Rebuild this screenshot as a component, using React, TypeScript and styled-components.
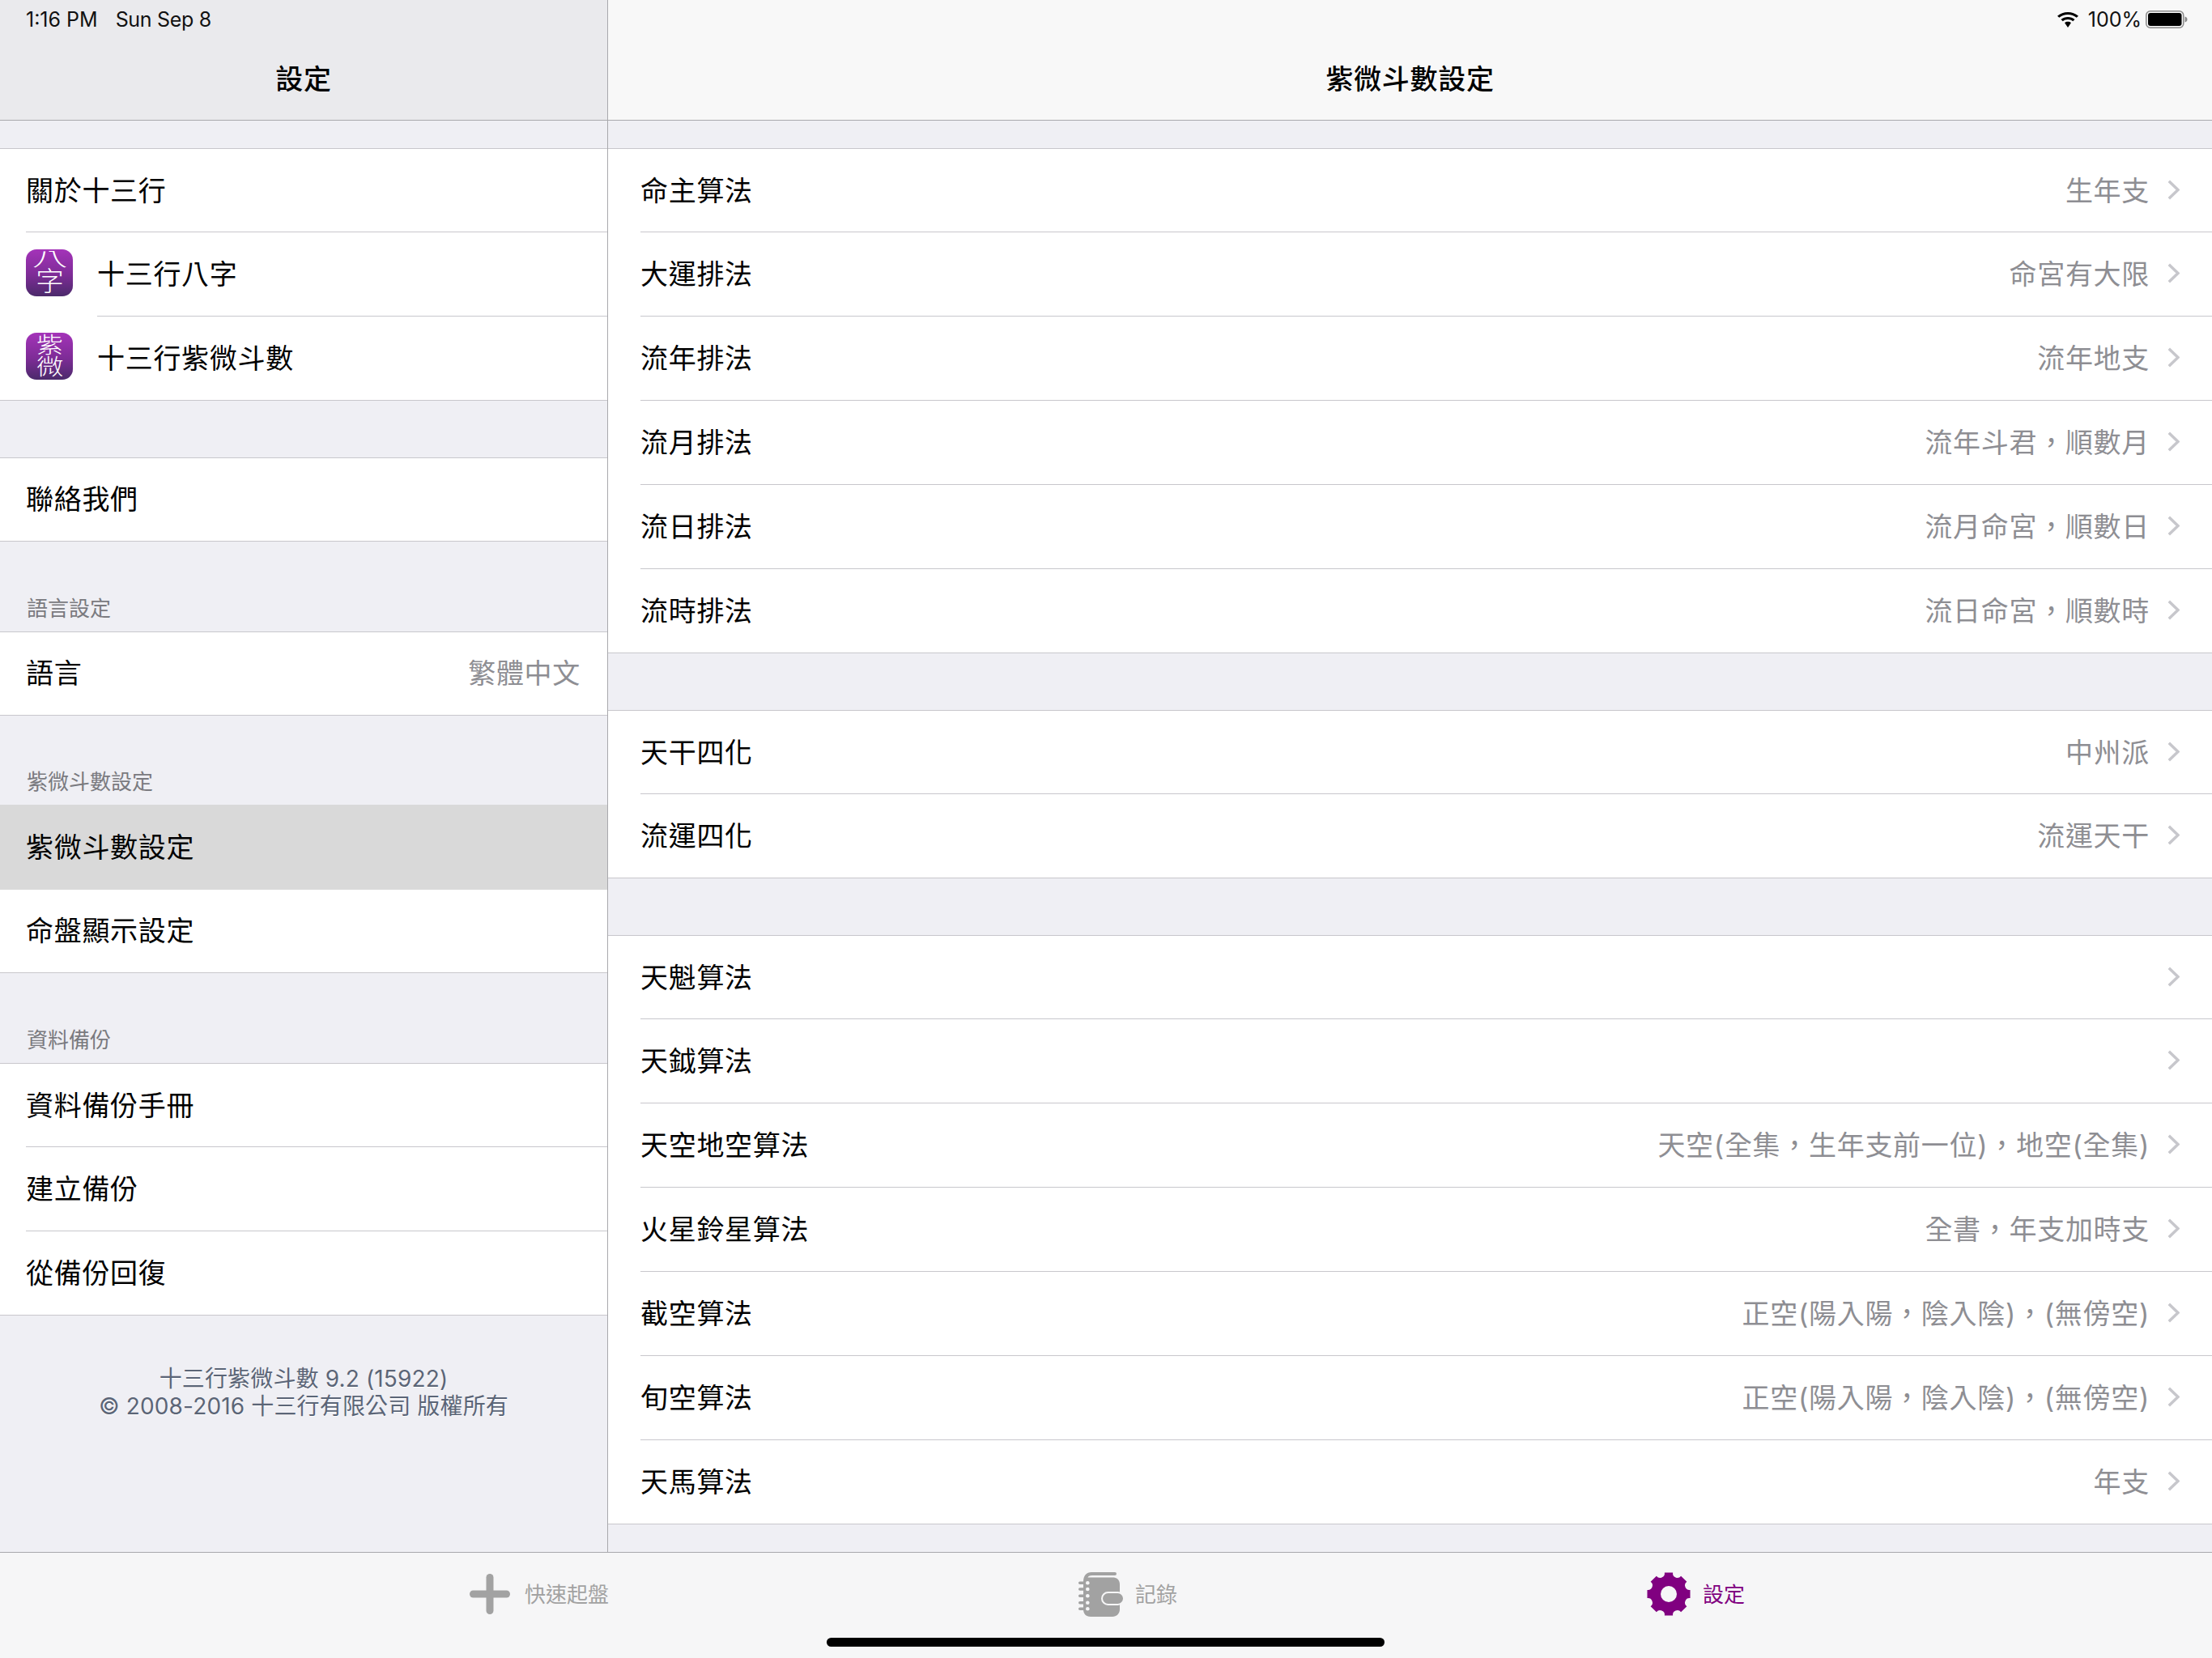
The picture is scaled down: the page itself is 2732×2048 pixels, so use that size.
import styled, { createGlobalStyle } from 'styled-components';

const GlobalStyle = createGlobalStyle`
  html, body {
    margin: 0;
    padding: 0;
    background: #efeff4;
  }
  * {
    box-sizing: border-box;
  }
`;

const FONT = `Inter, "Noto Sans CJK TC", "Noto Sans", sans-serif`;

const Page = styled.div`
  width: 2732px;
  height: 2048px;
  display: flex;
  flex-direction: column;
  background: #efeff4;
  font-family: ${FONT};
  overflow: hidden;
`;

const Panes = styled.div`
  flex: 1;
  display: flex;
  min-height: 0;
`;

const Sidebar = styled.div`
  width: 751px;
  flex: none;
  display: flex;
  flex-direction: column;
  border-right: 1px solid #a9a9ad;
`;

const Detail = styled.div`
  flex: 1;
  display: flex;
  flex-direction: column;
`;

const NavBar = styled.div<{ $tint: string }>`
  height: 149px;
  flex: none;
  background: ${(p) => p.$tint};
  border-bottom: 1px solid #a9a9ad;
  display: flex;
  flex-direction: column;
`;

const StatusRow = styled.div`
  height: 48px;
  padding: 0 30px 0 32px;
  display: flex;
  align-items: center;
  color: #111;
  font-size: 25px;
`;

const StatusTime = styled.span`
  margin-right: 22px;
`;

const StatusDate = styled.span`
  letter-spacing: -0.3px;
`;

const StatusRight = styled.div`
  margin-left: auto;
  display: flex;
  align-items: center;
  gap: 12px;
`;

const BatteryWrap = styled.div`
  margin-left: -7px;
  display: flex;
`;

const NavTitle = styled.div`
  height: 100px;
  padding-bottom: 5px;
  display: flex;
  align-items: center;
  justify-content: center;
  color: #000;
  font-size: 34px;
  font-weight: 500;
  letter-spacing: 0.7px;
`;

const Scroll = styled.div`
  flex: 1;
  display: flex;
  flex-direction: column;
  min-height: 0;
`;

const Gap = styled.div<{ $h: number }>`
  height: ${(p) => p.$h}px;
  flex: none;
  display: flex;
  align-items: flex-end;
  padding: 0 0 10px 33px;
  color: #7a7a7f;
  font-size: 26px;
  line-height: 36px;
`;

const Group = styled.div<{ $flushTop?: boolean }>`
  flex: none;
  background: #fff;
  border-top: 1px solid ${(p) => (p.$flushTop ? '#d9d9d9' : '#c8c7cc')};
  border-bottom: 1px solid #c8c7cc;
`;

const Row = styled.div<{ $h: number; $inset: number; $selected?: boolean; $noSep?: boolean; $sepFrom: number }>`
  height: ${(p) => p.$h}px;
  position: relative;
  display: flex;
  align-items: center;
  padding-left: ${(p) => p.$inset}px;
  padding-bottom: 5px;
  background: ${(p) => (p.$selected ? '#d9d9d9' : '#fff')};
  font-size: 34px;
  letter-spacing: 0.7px;
  color: #000;

  &::after {
    content: '';
    display: ${(p) => (p.$noSep ? 'none' : 'block')};
    position: absolute;
    left: ${(p) => p.$sepFrom}px;
    right: 0;
    bottom: 0;
    height: 1px;
    background: #c8c7cc;
  }
`;

const Label = styled.span`
  white-space: nowrap;
`;

const Value = styled.span<{ $end: number }>`
  margin-left: auto;
  margin-right: ${(p) => p.$end}px;
  color: #8e8e93;
  white-space: nowrap;
`;

const AppIcon = styled.div`
  width: 58px;
  height: 58px;
  flex: none;
  margin-right: 30px;
  border-radius: 13px;
  background: linear-gradient(180deg, #a433b9 0%, #7d2c96 55%, #4b2a6b 100%);
  color: #fff;
  font-weight: 300;
  letter-spacing: 0;
  display: flex;
  flex-direction: column;
  align-items: center;
  justify-content: center;
`;

const Glyph = styled.span<{ $size: number; $h: number; $stretch: number }>`
  display: block;
  height: ${(p) => p.$h}px;
  line-height: ${(p) => p.$h}px;
  font-size: ${(p) => p.$size}px;
  transform: scaleX(${(p) => p.$stretch});
`;

const Chevron = styled.svg`
  width: 15px;
  height: 25px;
  flex: none;
  margin: 2px 40px 0 22px;
`;

const Footer = styled.div`
  padding-top: 61px;
  text-align: center;
  color: #5b6577;
  font-size: 28px;
  letter-spacing: 0.15px;
  line-height: 34px;
  text-shadow: 0 1px 0 #fff;
`;

const TabBar = styled.div`
  height: 131px;
  flex: none;
  position: relative;
  background: #f6f6f7;
  border-top: 1px solid #a9a9ad;
  display: flex;
  padding: 23px 0 0 580px;
`;

const Tab = styled.div<{ $active?: boolean; $w: number; $gap: number }>`
  width: ${(p) => p.$w}px;
  flex: none;
  height: 56px;
  display: flex;
  align-items: center;
  gap: ${(p) => p.$gap}px;
  font-size: 26px;
  color: ${(p) => (p.$active ? '#800080' : '#a2a2a2')};
`;

const TabLabel = styled.span`
  padding-bottom: 4px;
`;

const HomeBar = styled.div`
  position: absolute;
  left: 1021px;
  top: 105px;
  width: 689px;
  height: 11px;
  border-radius: 6px;
  background: #000;
`;

type IconGlyph = { char: string; size: number; h: number; stretch: number };

type Item = {
  label: string;
  value?: string;
  icon?: IconGlyph[];
  selected?: boolean;
};

type Section = {
  gap: number;
  header?: string;
  items: Item[];
};

const sidebar: Section[] = [
  {
    gap: 34,
    items: [
      { label: '關於十三行' },
      {
        label: '十三行八字',
        icon: [
          { char: '八', size: 23, h: 22, stretch: 1.9 },
          { char: '字', size: 33, h: 33, stretch: 1.05 },
        ],
      },
      {
        label: '十三行紫微斗數',
        icon: [
          { char: '紫', size: 27, h: 27, stretch: 1.22 },
          { char: '微', size: 27, h: 27, stretch: 1.25 },
        ],
      },
    ],
  },
  { gap: 70, items: [{ label: '聯絡我們' }] },
  { gap: 111, header: '語言設定', items: [{ label: '語言', value: '繁體中文' }] },
  {
    gap: 110,
    header: '紫微斗數設定',
    items: [{ label: '紫微斗數設定', selected: true }, { label: '命盤顯示設定' }],
  },
  {
    gap: 111,
    header: '資料備份',
    items: [{ label: '資料備份手冊' }, { label: '建立備份' }, { label: '從備份回復' }],
  },
];

const detail: Section[] = [
  {
    gap: 34,
    items: [
      { label: '命主算法', value: '生年支' },
      { label: '大運排法', value: '命宮有大限' },
      { label: '流年排法', value: '流年地支' },
      { label: '流月排法', value: '流年斗君，順數月' },
      { label: '流日排法', value: '流月命宮，順數日' },
      { label: '流時排法', value: '流日命宮，順數時' },
    ],
  },
  {
    gap: 70,
    items: [
      { label: '天干四化', value: '中州派' },
      { label: '流運四化', value: '流運天干' },
    ],
  },
  {
    gap: 70,
    items: [
      { label: '天魁算法' },
      { label: '天鉞算法' },
      { label: '天空地空算法', value: '天空(全集，生年支前一位)，地空(全集)' },
      { label: '火星鈴星算法', value: '全書，年支加時支' },
      { label: '截空算法', value: '正空(陽入陽，陰入陰)，(無傍空)' },
      { label: '旬空算法', value: '正空(陽入陽，陰入陰)，(無傍空)' },
      { label: '天馬算法', value: '年支' },
    ],
  },
];

function WifiIcon() {
  return (
    <svg width="26" height="19" viewBox="1.700 0.200 22.600 18.600" preserveAspectRatio="none">
      <path d="M13 3.200c3.500 0 6.800 1.400 9.300 3.700l2-2.100C21.200 1.900 17.200.2 13 .2S4.800 1.900 1.700 4.800l2 2.100C6.200 4.600 9.500 3.200 13 3.200z" fill="#000" />
      <path d="M13 9c2 0 3.900.8 5.400 2.100l2-2.100C18.400 7.100 15.800 6 13 6S7.600 7.100 5.600 9l2 2.100C9.100 9.800 11 9 13 9z" fill="#000" />
      <path d="M13 11.800c-1.300 0-2.500.5-3.400 1.300L13 18.800l3.400-5.700c-.9-.8-2.100-1.300-3.400-1.300z" fill="#000" />
    </svg>
  );
}

function BatteryIcon() {
  return (
    <svg width="52" height="22" viewBox="0 0 52 22">
      <rect x="0.750" y="0.750" width="46" height="20.500" rx="5" fill="none" stroke="#8a8a8a" strokeWidth="1.500" />
      <rect x="3" y="3" width="41.500" height="16" rx="3" fill="#000" />
      <path d="M48.500 7.500c1.800.5 3 1.900 3 3.500s-1.200 3-3 3.500z" fill="#8a8a8a" />
    </svg>
  );
}

function PlusIcon() {
  return (
    <svg width="50" height="50" viewBox="0 0 50 50">
      <rect x="20.500" y="0" width="9" height="50" rx="4.500" fill="#a2a2a2" />
      <rect x="0" y="20.500" width="50" height="9" rx="4.500" fill="#a2a2a2" />
    </svg>
  );
}

function NotebookIcon() {
  return (
    <svg width="56" height="55" viewBox="0 0 56 55">
      <path d="M6 12C6 4 10 0 16 0H45a2 2 0 0 1 0 4H17C13.500 4 12 5 11.500 6.500H42C47 6.500 51 9 51 15V46C51 51 47 55 42 55H15C9 55 6 51 6 46Z" fill="#a2a2a2" />
      <rect x="29" y="25" width="27" height="15" rx="7.500" fill="#a2a2a2" stroke="#f6f6f7" strokeWidth="2" />
      {[13.300, 21, 29.300, 37.700, 45.300].map((y) => (
        <g key={y}>
          <rect x="0" y={y - 1.700} width="8" height="3.400" rx="1.700" fill="#a2a2a2" />
          <circle cx="11.300" cy={y} r="2.300" fill="#f6f6f7" />
        </g>
      ))}
    </svg>
  );
}

function gearPath(): string {
  const cx = 27;
  const cy = 27;
  const outer = 27;
  const half = 0.19;
  const step = (Math.PI * 2) / 8;
  const p = (t: number) =>
    `${(cx + outer * Math.cos(t)).toFixed(2)} ${(cy + outer * Math.sin(t)).toFixed(2)}`;
  let d = '';
  for (let i = 0; i < 8; i++) {
    const a = i * step - Math.PI / 2;
    d += `${i === 0 ? 'M' : 'L'}${p(a - half)} L${p(a + half)} A5.600 5.600 0 0 0 ${p(a + step - half)} `;
  }
  return d + 'Z';
}

function GearIcon() {
  return (
    <svg width="54" height="54" viewBox="0 0 54 54">
      <path d={gearPath()} fill="#800080" />
      <circle cx="27" cy="27" r="10" fill="#f6f6f7" />
    </svg>
  );
}

function rowHeight(items: Item[], i: number): number {
  if (items.length === 1) return 102;
  const base = i === 0 || i === items.length - 1 ? 103 : 104;
  // a selected row swallows the separator line below it
  if (items[i].selected) return base + 1;
  if (items[i - 1]?.selected) return base - 1;
  return base;
}

function ListSection({ section, inset, valueEnd, chevron }: { section: Section; inset: number; valueEnd: number; chevron: boolean }) {
  const { items } = section;
  return (
    <>
      <Gap $h={section.gap}>{section.header}</Gap>
      <Group $flushTop={items[0].selected}>
        {items.map((item, i) => {
          const last = i === items.length - 1;
          // the separator between icon rows starts at the label, not the icon
          const sepFrom = item.icon && items[i + 1]?.icon ? 120 : inset;
          return (
            <Row
              key={item.label}
              $h={rowHeight(items, i)}
              $inset={inset}
              $selected={item.selected}
              $noSep={last || item.selected}
              $sepFrom={sepFrom}
            >
              {item.icon && (
                <AppIcon>
                  {item.icon.map((g) => (
                    <Glyph key={g.char} $size={g.size} $h={g.h} $stretch={g.stretch}>
                      {g.char}
                    </Glyph>
                  ))}
                </AppIcon>
              )}
              <Label>{item.label}</Label>
              {chevron ? (
                <>
                  <Value $end={0}>{item.value}</Value>
                  <Chevron viewBox="0 0 15 25">
                    <path d="M1.800 1.800L13 12.500L1.800 23.200" fill="none" stroke="#c7c7cc" strokeWidth="3.500" />
                  </Chevron>
                </>
              ) : (
                item.value && <Value $end={valueEnd}>{item.value}</Value>
              )}
            </Row>
          );
        })}
      </Group>
    </>
  );
}

export default function App() {
  return (
    <Page>
      <GlobalStyle />
      <Panes>
        <Sidebar>
          <NavBar $tint="#eaeaed">
            <StatusRow>
              <StatusTime>1:16 PM</StatusTime>
              <StatusDate>Sun Sep 8</StatusDate>
            </StatusRow>
            <NavTitle>設定</NavTitle>
          </NavBar>
          <Scroll>
            {sidebar.map((s, i) => (
              <ListSection key={i} section={s} inset={32} valueEnd={33} chevron={false} />
            ))}
            <Footer>
              <div>十三行紫微斗數 9.2 (15922)</div>
              <div>© 2008-2016 十三行有限公司 版權所有</div>
            </Footer>
          </Scroll>
        </Sidebar>
        <Detail>
          <NavBar $tint="#f8f8f8">
            <StatusRow>
              <StatusRight>
                <WifiIcon />
                <span>100%</span>
                <BatteryWrap>
                  <BatteryIcon />
                </BatteryWrap>
              </StatusRight>
            </StatusRow>
            <NavTitle>紫微斗數設定</NavTitle>
          </NavBar>
          <Scroll>
            {detail.map((s, i) => (
              <ListSection key={i} section={s} inset={40} valueEnd={0} chevron />
            ))}
          </Scroll>
        </Detail>
      </Panes>
      <TabBar>
        <Tab $w={752} $gap={18}>
          <PlusIcon />
          <TabLabel>快速起盤</TabLabel>
        </Tab>
        <Tab $w={702} $gap={14}>
          <NotebookIcon />
          <TabLabel>記錄</TabLabel>
        </Tab>
        <Tab $w={698} $gap={15} $active>
          <GearIcon />
          <TabLabel>設定</TabLabel>
        </Tab>
        <HomeBar />
      </TabBar>
    </Page>
  );
}
